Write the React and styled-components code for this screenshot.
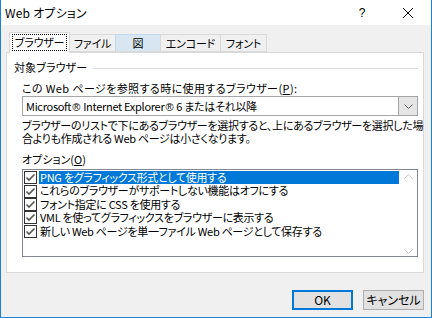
import React from "react";
import styled, { createGlobalStyle } from "styled-components";

const Global = createGlobalStyle`
  html, body {
    margin: 0;
    padding: 0;
    background: #f0f0f0;
  }
  body {
    font-family: "Noto Sans CJK JP", "Liberation Sans", sans-serif;
    font-size: 11px;
    font-feature-settings: "palt";
    color: #000;
  }
`;

const Window = styled.div`
  width: 432px;
  height: 318px;
  box-sizing: border-box;
  border: 1px solid #1883d7;
  border-top: none;
  background: #f0f0f0;
  display: flex;
  flex-direction: column;
`;

const TitleBar = styled.div`
  height: 25px;
  background: #fff;
  display: flex;
  align-items: center;
  padding-left: 4px;
  font-size: 12px;
  line-height: 14px;
`;

const TitleText = styled.div`
  flex: 1;
  letter-spacing: 0.2px;
`;

const TitleButton = styled.div`
  width: ${(p) => p.w}px;
  display: flex;
  justify-content: center;
  align-items: center;
  font-family: "Liberation Sans", sans-serif;
  font-size: 12px;
`;

const Body = styled.div`
  flex: 1;
  padding: 7px 7px 0 5px;
  display: flex;
  flex-direction: column;
`;

const TabRow = styled.div`
  display: flex;
  align-items: flex-end;
  height: 20px;
  padding-left: 3px;
  position: relative;
  z-index: 1;
`;

const Tab = styled.div`
  height: ${(p) => (p.selected ? 21 : 18)}px;
  margin-bottom: ${(p) => (p.selected ? -1 : 0)}px;
  box-sizing: border-box;
  border: 1px solid ${(p) => (p.hover ? "#c4d8ec" : "#d9d9d9")};
  border-bottom: ${(p) => (p.selected ? "none" : "1px solid #d9d9d9")};
  margin-left: ${(p) => (p.first ? 0 : -1)}px;
  background: ${(p) => (p.selected ? "#fff" : p.hover ? "#d8e6f2" : "#f0f0f0")};
  display: flex;
  align-items: center;
  justify-content: center;
  width: ${(p) => p.w}px;
  line-height: 13px;
  letter-spacing: -0.2px;
  white-space: nowrap;
`;

const FocusLabel = styled.span`
  outline: 1px dotted #000;
  outline-offset: 1px;
  padding: 0 1px;
  margin-top: -1px;
`;

const Panel = styled.div`
  height: 221px;
  box-sizing: border-box;
  background: #fff;
  border: 1px solid #d9d9d9;
  padding: 6px 5px 0 7px;
  display: flex;
  flex-direction: column;
`;

const GroupHeader = styled.div`
  display: flex;
  align-items: center;
  gap: 6px;
  height: 14px;
  margin-top: 1px;
  line-height: 14px;
  letter-spacing: 0.1px;
`;

const GroupLine = styled.div`
  flex: 1;
  height: 1px;
  background: #dcdcdc;
  margin-top: 2px;
`;

const Indent = styled.div`
  padding-left: 8px;
  display: flex;
  flex-direction: column;
`;

const Label = styled.div`
  line-height: 14px;
  margin-top: ${(p) => p.mt || 0}px;
  letter-spacing: ${(p) => p.ls ?? 0}px;
  white-space: nowrap;
`;

const Select = styled.div`
  margin-top: 1px;
  height: 20px;
  box-sizing: border-box;
  border: 1px solid #a5a5a5;
  display: flex;
`;

const SelectText = styled.div`
  flex: 1;
  padding-left: 3px;
  line-height: 18px;
  letter-spacing: -0.3px;
  white-space: nowrap;
`;

const Reg = styled.span`
  font-family: "Liberation Sans", sans-serif;
  font-size: 11px;
  margin: 0 1px;
`;

const SelectArrow = styled.div`
  width: 18px;
  background: #e5e5e5;
  border-left: 1px solid #a5a5a5;
  display: flex;
  align-items: center;
  justify-content: center;
`;

const Paragraph = styled.div`
  margin-top: 3px;
  line-height: 12.5px;
  letter-spacing: -0.3px;
  white-space: nowrap;
`;

const ListBox = styled.div`
  margin-top: 3px;
  height: 88px;
  box-sizing: border-box;
  border: 1px solid #828790;
  display: flex;
`;

const Items = styled.div`
  flex: 1;
  padding-top: 1px;
  display: flex;
  flex-direction: column;
`;

const Item = styled.div`
  height: 13.4px;
  display: flex;
  align-items: center;
  padding-left: 1px;
`;

const CheckBox = styled.div`
  width: 13px;
  height: 13px;
  box-sizing: border-box;
  border: 1px solid #333;
  background: #fff;
  display: flex;
  align-items: center;
  justify-content: center;
  flex-shrink: 0;
`;

const ItemText = styled.div`
  flex: 1;
  margin-left: 2px;
  padding-left: 1px;
  height: 13.4px;
  line-height: 13.4px;
  letter-spacing: -0.3px;
  white-space: nowrap;
  background: ${(p) => (p.active ? "#0078d7" : "transparent")};
  color: ${(p) => (p.active ? "#fff" : "#000")};
`;

const ScrollBar = styled.div`
  width: 18px;
  display: flex;
  flex-direction: column;
  justify-content: space-between;
  align-items: center;
  padding: 4px 0 2px;
`;

const Footer = styled.div`
  flex: 1;
  display: flex;
  justify-content: flex-end;
  align-items: flex-start;
  padding-top: 17px;
  gap: 10px;
`;

const Button = styled.div`
  width: 61px;
  height: 20px;
  box-sizing: border-box;
  border: ${(p) => (p.primary ? "2px solid #0078d7" : "1px solid #adadad")};
  background: #e1e1e1;
  display: flex;
  align-items: center;
  justify-content: center;
  line-height: 14px;
  font-size: 12px;
`;

const Chevron = ({ dir = "down", color = "#606060" }) => (
  <svg width="9" height="5" viewBox="0 0 9 5">
    <path
      d={dir === "down" ? "M0.5 0.5 L4.5 4.5 L8.5 0.5" : "M0.5 4.5 L4.5 0.5 L8.5 4.5"}
      fill="none"
      stroke={color}
      strokeWidth="1"
    />
  </svg>
);

const Check = () => (
  <svg width="11" height="11" viewBox="0 0 11 11">
    <path d="M1.5 5.5 L4 8 L9.5 2.5" fill="none" stroke="#555" strokeWidth="1.6" />
  </svg>
);

const options = [
  "PNG をグラフィックス形式として使用する",
  "これらのブラウザーがサポートしない機能はオフにする",
  "フォント指定に CSS を使用する",
  "VML を使ってグラフィックスをブラウザーに表示する",
  "新しい Web ページを単一ファイル Web ページとして保存する",
];

export default function App() {
  return (
    <>
      <Global />
      <Window>
        <TitleBar>
          <TitleText>Web オプション</TitleText>
          <TitleButton w={46}>?</TitleButton>
          <TitleButton w={46}>
            <svg width="10" height="10" viewBox="0 0 10 10">
              <path d="M0 0 L10 10 M10 0 L0 10" stroke="#000" strokeWidth="1" />
            </svg>
          </TitleButton>
        </TitleBar>
        <Body>
          <TabRow>
            <Tab selected first w={61}>
              <FocusLabel>ブラウザー</FocusLabel>
            </Tab>
            <Tab w={47}>ファイル</Tab>
            <Tab hover w={46}>図</Tab>
            <Tab w={61}>エンコード</Tab>
            <Tab w={47}>フォント</Tab>
          </TabRow>
          <Panel>
            <GroupHeader>
              <span>対象ブラウザー</span>
              <GroupLine />
            </GroupHeader>
            <Indent>
              <Label mt={7} ls={0.4}>
                この Web ページを参照する時に使用するブラウザー(<u>P</u>):
              </Label>
              <Select>
                <SelectText>
                  Microsoft<Reg>®</Reg> Internet Explorer<Reg>®</Reg> 6 またはそれ以降
                </SelectText>
                <SelectArrow>
                  <Chevron />
                </SelectArrow>
              </Select>
              <Paragraph>
                ブラウザーのリストで下にあるブラウザーを選択すると、上にあるブラウザーを選択した場
                <br />
                合よりも作成される Web ページは小さくなります。
              </Paragraph>
              <Label mt={8}>
                オプション(<u>O</u>)
              </Label>
              <ListBox>
                <Items>
                  {options.map((t, i) => (
                    <Item key={t}>
                      <CheckBox>
                        <Check />
                      </CheckBox>
                      <ItemText active={i === 0}>{t}</ItemText>
                    </Item>
                  ))}
                </Items>
                <ScrollBar>
                  <Chevron dir="up" color="#c8c8c8" />
                  <Chevron color="#c8c8c8" />
                </ScrollBar>
              </ListBox>
            </Indent>
          </Panel>
          <Footer>
            <Button primary>OK</Button>
            <Button>キャンセル</Button>
          </Footer>
        </Body>
      </Window>
    </>
  );
}
